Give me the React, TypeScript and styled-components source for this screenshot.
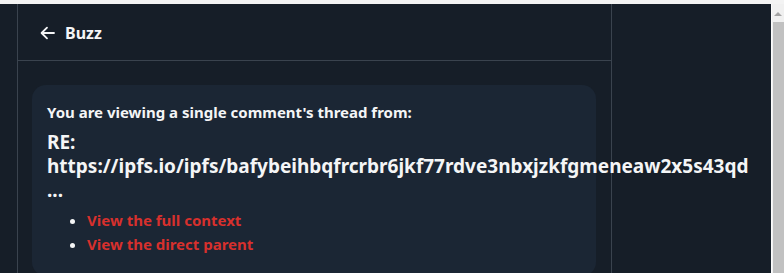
import React from 'react';
import styled, {createGlobalStyle} from 'styled-components';

const color = {
  page: '#161e28',
  card: '#1b2634',
  line: '#3a434e',
  text: '#f4f5f6',
  link: '#d7302d',
  topStrip: '#f3f3f3',
  track: '#f0f0f0',
  thumb: '#c1c1c1',
};

const font = `"Noto Sans", "Open Sans", sans-serif`;

const GlobalStyle = createGlobalStyle`
  html, body {
    margin: 0;
    padding: 0;
    height: 100%;
    overflow: hidden;
    background: ${color.page};
  }
  #root {
    height: 100%;
  }
`;

export default function App() {
  return (
    <>
      <GlobalStyle/>
      <Root>
        <TopStrip/>
        <Body>
          <Gutter/>
          <Main>
            <Header>
              <BackButton aria-label='Back'>
                <svg width='15' height='14' viewBox='0 0 15 14' fill='none' stroke={color.text} strokeWidth='1.8' strokeLinecap='round' strokeLinejoin='round'>
                  <path d='M14 7H1.8'/>
                  <path d='M7 1.6L1.6 7L7 12.4'/>
                </svg>
              </BackButton>
              <HeaderTitle>Buzz</HeaderTitle>
            </Header>
            <Card>
              <Notice>You are viewing a single comment's thread from:</Notice>
              <ThreadTitle>RE: https://ipfs.io/ipfs/bafybeihbqfrcrbr6jkf77rdve3nbxjzkfgmeneaw2x5s43qd ...</ThreadTitle>
              <LinkList>
                <li><ContextLink href='#'>View the full context</ContextLink></li>
                <li><ContextLink href='#'>View the direct parent</ContextLink></li>
              </LinkList>
            </Card>
          </Main>
          <Side/>
          <Scrollbar>
            <ScrollArrow/>
            <ScrollThumb/>
          </Scrollbar>
        </Body>
      </Root>
    </>
  );
}

const Root = styled.div`
  display: flex;
  flex-direction: column;
  height: 100%;
  font-family: ${font};
  color: ${color.text};
`;

const TopStrip = styled.div`
  height: 4px;
  flex-shrink: 0;
  background: ${color.topStrip};
`;

const Body = styled.div`
  display: flex;
  flex: 1;
  min-height: 0;
  overflow: hidden;
`;

const Gutter = styled.div`
  width: 17px;
  flex-shrink: 0;
`;

const Main = styled.div`
  width: 593px;
  flex-shrink: 0;
  border-left: 1px solid ${color.line};
  border-right: 1px solid ${color.line};
  display: flex;
  flex-direction: column;
`;

const Side = styled.div`
  flex: 1;
`;

const Header = styled.div`
  height: 56px;
  flex-shrink: 0;
  border-bottom: 1px solid ${color.line};
  display: flex;
  align-items: center;
  padding-left: 22px;
  gap: 10px;
`;

const BackButton = styled.div`
  display: flex;
  align-items: center;
  margin-top: 2px;
`;

const HeaderTitle = styled.div`
  font-size: 16px;
  font-weight: 700;
  margin-top: 2px;
`;

const Card = styled.div`
  margin: 24px 15px 0 14px;
  padding: 16px 15px 20px;
  background: ${color.card};
  border-radius: 14px;
  flex: 1 0 auto;
`;

const Notice = styled.div`
  font-size: 15px;
  font-weight: 700;
  line-height: 22px;
`;

const ThreadTitle = styled.div`
  font-size: 19px;
  font-weight: 700;
  line-height: 24px;
  margin-top: 7px;
`;

const LinkList = styled.ul`
  margin: 6px 0 0;
  padding-left: 40px;
  line-height: 24px;
  font-size: 15px;
  font-weight: 700;

  & li::marker {
    color: ${color.text};
  }
`;

const ContextLink = styled.a`
  color: ${color.link};
  text-decoration: none;
`;

const Scrollbar = styled.div`
  width: 12px;
  flex-shrink: 0;
  background: ${color.track};
  border-left: 1px solid #fafafa;
  display: flex;
  flex-direction: column;
  align-items: center;
`;

const ScrollArrow = styled.div`
  margin-top: 8px;
  width: 0;
  height: 0;
  border-left: 4px solid transparent;
  border-right: 4px solid transparent;
  border-bottom: 4px solid #a3a3a3;
`;

const ScrollThumb = styled.div`
  margin-top: 6px;
  align-self: stretch;
  margin-left: 1px;
  flex: 1;
  background: ${color.thumb};
`;
